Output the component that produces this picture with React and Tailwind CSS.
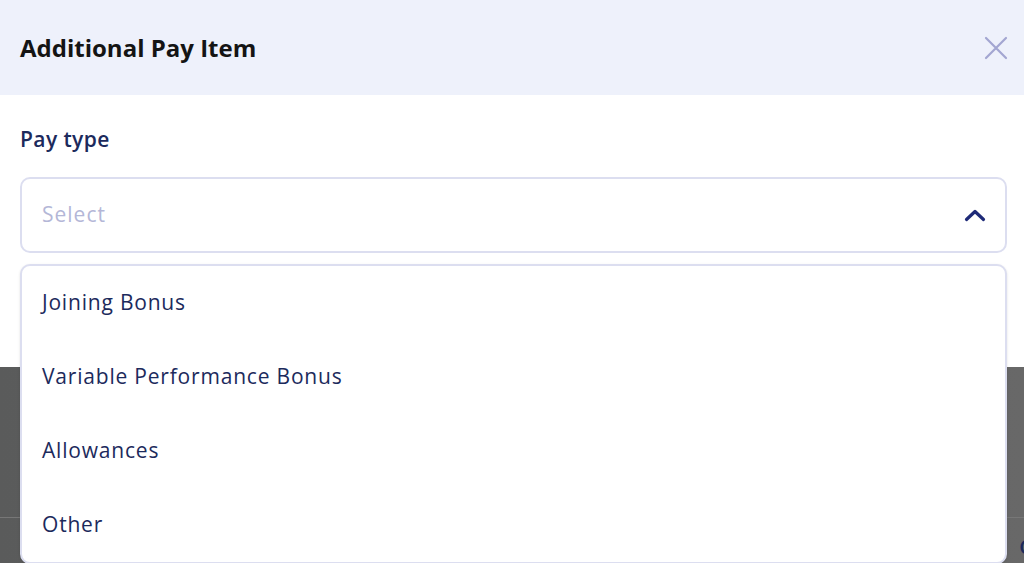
import React from "react";

const options = [
  "Joining Bonus",
  "Variable Performance Bonus",
  "Allowances",
  "Other",
];

function App() {
  return (
    <div
      className="relative h-[563px] w-full overflow-hidden bg-gradient-to-r from-[#5a5b5b] to-[#686868]"
      style={{ fontFamily: "'Open Sans', 'Noto Sans', sans-serif" }}
    >
      {/* modal */}
      <div className="h-[367px] bg-white">
        <div className="flex h-[95px] items-center justify-between bg-[#eef1fb] pl-5 pr-[12px]">
          <h2 className="text-[24px] font-bold text-[#141414]">
            Additional Pay Item
          </h2>
          <button className="p-1 text-[#a3a6d1]">
            <svg width="24" height="24" viewBox="0 0 24 24" fill="none">
              <path
                d="M2 2L22 22M22 2L2 22"
                stroke="currentColor"
                strokeWidth="2.2"
                strokeLinecap="round"
              />
            </svg>
          </button>
        </div>
        <div className="pl-5 pr-[17px] pt-[29px]">
          <label className="block text-[21px] leading-[30px] font-semibold tracking-[0.4px] text-[#1c2a5c]">
            Pay type
          </label>
          <div className="mt-[23px] flex h-[76px] items-center justify-between rounded-[10px] border-2 border-[#dcdef0] pl-5 pr-[19px]">
            <span className="text-[21px] tracking-[1px] text-[#b4b7d7]">Select</span>
            <svg width="22" height="14" viewBox="0 0 22 14" fill="none">
              <path
                d="M2.5 11.5L11 3.5L19.5 11.5"
                stroke="#1e2a78"
                strokeWidth="3.2"
                strokeLinecap="round"
                strokeLinejoin="round"
              />
            </svg>
          </div>
        </div>
      </div>

      {/* page behind overlay */}
      <div className="mt-[150px] flex h-[46px] justify-end border-t border-[#777]">
        <span className="mt-[14px] mr-[-8px] text-[20px] font-semibold text-[#1c2a5c]">
          C
        </span>
      </div>

      {/* dropdown menu */}
      <div className="absolute left-5 top-[264px] w-[987px] rounded-[10px] border-2 border-[#dcdef0] bg-white shadow-sm">
        {options.map((opt) => (
          <div
            key={opt}
            className="flex h-[74px] items-center px-5 text-[21px] tracking-[0.8px] text-[#1c2a5c]"
          >
            {opt}
          </div>
        ))}
      </div>
    </div>
  );
}

export default App;
